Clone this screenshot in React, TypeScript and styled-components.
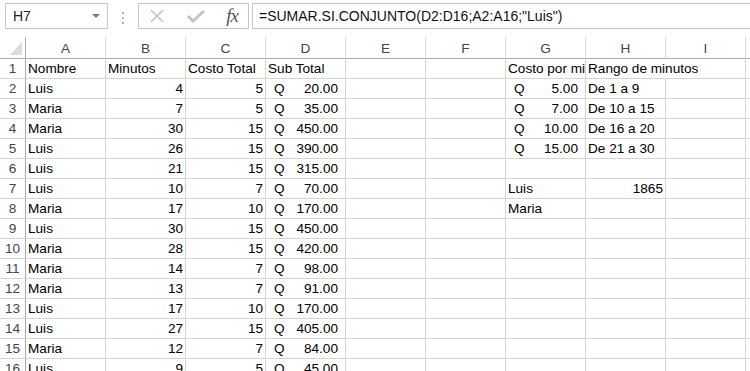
import * as React from 'react'
import styled, { createGlobalStyle } from 'styled-components'

type Value = string | number | { q: string } | null

const columns = ['A', 'B', 'C', 'D', 'E', 'F', 'G', 'H', 'I', '']

const rates: Record<number, [Value, Value]> = {
  1: ['Costo por mi', 'Rango de minutos'],
  2: [{ q: '5.00' }, 'De 1 a 9'],
  3: [{ q: '7.00' }, 'De 10 a 15'],
  4: [{ q: '10.00' }, 'De 16 a 20'],
  5: [{ q: '15.00' }, 'De 21 a 30'],
  7: ['Luis', 1865],
  8: ['Maria', null],
}

const calls: [string, number, number, string][] = [
  ['Luis', 4, 5, '20.00'],
  ['Maria', 7, 5, '35.00'],
  ['Maria', 30, 15, '450.00'],
  ['Luis', 26, 15, '390.00'],
  ['Luis', 21, 15, '315.00'],
  ['Luis', 10, 7, '70.00'],
  ['Maria', 17, 10, '170.00'],
  ['Luis', 30, 15, '450.00'],
  ['Maria', 28, 15, '420.00'],
  ['Maria', 14, 7, '98.00'],
  ['Maria', 13, 7, '91.00'],
  ['Luis', 17, 10, '170.00'],
  ['Luis', 27, 15, '405.00'],
  ['Maria', 12, 7, '84.00'],
  ['Luis', 9, 5, '45.00'],
]

const rows: Value[][] = [
  ['Nombre', 'Minutos', 'Costo Total', 'Sub Total', null, null, ...rates[1], null, null],
  ...calls.map(([name, min, cost, sub], i) => {
    const extra = rates[i + 2] || [null, null]
    return [name, min, cost, { q: sub }, null, null, ...extra, null, null] as Value[]
  }),
]

const isMoney = (v: Value): v is { q: string } => v !== null && typeof v === 'object'

const App: React.FC = () => (
  <Window>
    <GlobalStyle />
    <FormulaBar>
      <NameBox>
        H7
        <Caret />
      </NameBox>
      <Grip>
        <span />
        <span />
        <span />
      </Grip>
      <Actions>
        <svg width="16" height="16" viewBox="0 0 16 16">
          <path d="M2 2 L14 14 M14 2 L2 14" stroke="#c4c4c4" strokeWidth="1.6" fill="none" />
        </svg>
        <svg width="20" height="14" viewBox="0 0 20 14">
          <path d="M2 7 L7 12 L18 2" stroke="#c4c4c4" strokeWidth="3" fill="none" />
        </svg>
        <Fx>fx</Fx>
      </Actions>
      <Formula>=SUMAR.SI.CONJUNTO(D2:D16;A2:A16;"Luis")</Formula>
    </FormulaBar>
    <Sheet>
      <Corner>
        <svg width="12" height="13" viewBox="0 0 12 13">
          <polygon points="12,0 12,13 0,13" fill="#dcdcdc" />
        </svg>
      </Corner>
      {columns.map((c, i) => (
        <ColHead key={i}>{c}</ColHead>
      ))}
      {rows.map((row, r) => (
        <React.Fragment key={r}>
          <RowHead>{r + 1}</RowHead>
          {row.map((v, c) =>
            isMoney(v) ? (
              <Money key={c}>
                <span>Q</span>
                <span>{v.q}</span>
              </Money>
            ) : (
              <Cell key={c} $right={typeof v === 'number'} $spill={r === 0 && c === 7}>
                {v}
              </Cell>
            )
          )}
        </React.Fragment>
      ))}
    </Sheet>
  </Window>
)

export default App

// Styles
const GlobalStyle = createGlobalStyle`
  html, body {
    margin: 0;
    padding: 0;
    background: #ffffff;
  }
`

const Window = styled.div`
  width: 750px;
  height: 371px;
  overflow: hidden;
  background: #ffffff;
  font-family: 'Liberation Sans', Arial, sans-serif;
  color: #000000;
`

const FormulaBar = styled.div`
  height: 37px;
  display: flex;
  align-items: flex-start;
  padding-top: 3px;
  box-sizing: border-box;
`

const NameBox = styled.div`
  position: relative;
  margin-left: 5px;
  width: 103px;
  height: 26px;
  box-sizing: border-box;
  border: 1px solid #c6c6c6;
  padding-left: 7px;
  display: flex;
  align-items: center;
  font-size: 14px;
  color: #222222;
`

const Caret = styled.span`
  position: absolute;
  right: 7px;
  top: 10px;
  border-left: 4px solid transparent;
  border-right: 4px solid transparent;
  border-top: 4px solid #7a7a7a;
`

const Grip = styled.div`
  width: 30px;
  display: flex;
  flex-direction: column;
  align-items: center;
  gap: 3px;
  padding-top: 9px;

  span {
    width: 2px;
    height: 2px;
    background: #b4b4b4;
  }
`

const Actions = styled.div`
  width: 111px;
  height: 26px;
  box-sizing: border-box;
  border: 1px solid #c6c6c6;
  display: flex;
  align-items: center;
  padding: 0 10px 0 10px;
  justify-content: space-between;
`

const Fx = styled.span`
  font-family: 'Liberation Serif', 'Times New Roman', serif;
  font-style: italic;
  font-size: 19px;
  color: #555555;
  line-height: 1;
  margin-top: -2px;
  letter-spacing: -1px;
`

const Formula = styled.div`
  flex: 1;
  margin-left: 3px;
  height: 26px;
  box-sizing: border-box;
  border: 1px solid #c6c6c6;
  border-right: none;
  padding-left: 6px;
  display: flex;
  align-items: center;
  font-size: 14px;
  color: #111111;
  white-space: nowrap;
`

const Sheet = styled.div`
  display: grid;
  grid-template-columns: 26px repeat(10, 80px);
  grid-template-rows: 22px;
  grid-auto-rows: 20px;
  font-size: 13.6px;
`

const Corner = styled.div`
  box-sizing: border-box;
  border-right: 1px solid #ababab;
  border-bottom: 1px solid #ababab;
  display: flex;
  align-items: flex-end;
  justify-content: flex-end;
  padding: 0 3px 3px 0;
`

const ColHead = styled.div`
  box-sizing: border-box;
  border-right: 1px solid #dadada;
  border-bottom: 1px solid #ababab;
  display: flex;
  align-items: center;
  justify-content: center;
  padding-top: 2px;
  color: #444444;
`

const RowHead = styled.div`
  box-sizing: border-box;
  border-right: 1px solid #ababab;
  border-bottom: 1px solid #d4d4d4;
  display: flex;
  align-items: flex-end;
  justify-content: center;
  padding-bottom: 2px;
  color: #444444;
`

const Cell = styled.div<{ $right?: boolean; $spill?: boolean }>`
  box-sizing: border-box;
  border-right: 1px solid ${(p) => (p.$spill ? 'transparent' : '#d4d4d4')};
  border-bottom: 1px solid #d4d4d4;
  display: flex;
  align-items: flex-end;
  justify-content: ${(p) => (p.$right ? 'flex-end' : 'flex-start')};
  padding: 0 2px 2px 2px;
  white-space: nowrap;
  overflow: ${(p) => (p.$spill ? 'visible' : 'hidden')};
`

const Money = styled.div`
  box-sizing: border-box;
  border-right: 1px solid #d4d4d4;
  border-bottom: 1px solid #d4d4d4;
  display: flex;
  align-items: flex-end;
  justify-content: space-between;
  padding: 0 7px 2px 8px;
  white-space: nowrap;
  overflow: hidden;
`
